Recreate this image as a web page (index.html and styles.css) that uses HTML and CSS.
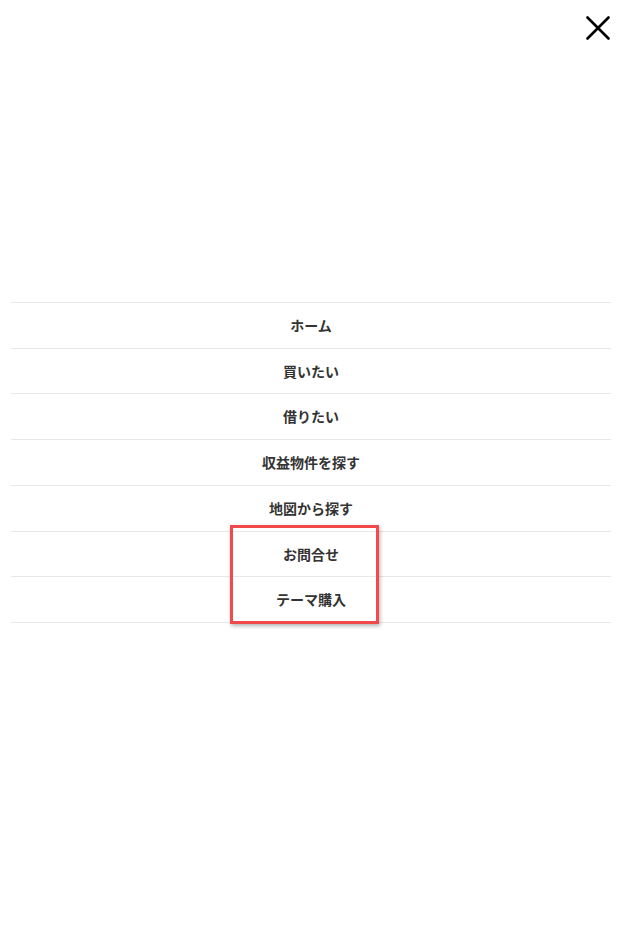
FILE: index.html
```html
<!DOCTYPE html>
<html lang="ja">
<head>
<meta charset="utf-8">
<title>Menu</title>
<link rel="stylesheet" href="styles.css">
</head>
<body>
<div class="drawer">
  <header class="drawer-head">
    <button class="close" aria-label="閉じる">
      <svg width="24" height="24" viewBox="0 0 24 24"><path d="M1.5 1.5 L22.5 22.5 M22.5 1.5 L1.5 22.5" stroke="#000" stroke-width="2.6" stroke-linecap="round" fill="none"/></svg>
    </button>
  </header>
  <nav class="menu">
    <ul class="menu-list">
      <li class="menu-item"><a href="#">ホーム</a></li>
      <li class="menu-item"><a href="#">買いたい</a></li>
      <li class="menu-item"><a href="#">借りたい</a></li>
      <li class="menu-item"><a href="#">収益物件を探す</a></li>
      <li class="menu-item"><a href="#">地図から探す</a></li>
      <li class="menu-item"><a href="#">お問合せ</a></li>
      <li class="menu-item"><a href="#">テーマ購入</a></li>
    </ul>
    <div class="highlight"></div>
  </nav>
</div>
</body>
</html>
```

FILE: styles.css
```css
html, body {
  margin: 0;
  padding: 0;
  background: #fff;
}
body {
  font-family: "Noto Sans CJK JP", "Noto Sans", sans-serif;
  color: #333;
}
.drawer {
  width: 622px;
  min-height: 925px;
}
.drawer-head {
  display: flex;
  justify-content: flex-end;
  padding: 16px 12px 0 0;
  height: 302px;
  box-sizing: border-box;
}
.close {
  border: 0;
  background: none;
  padding: 0;
  width: 24px;
  height: 24px;
  cursor: pointer;
}
.close svg { display: block; }
.menu {
  position: relative;
  margin: 0 11px;
}
.menu-list {
  list-style: none;
  margin: 0;
  padding: 0;
  border-bottom: 1px solid #e8e8e8;
}
.menu-item {
  border-top: 1px solid #e8e8e8;
}
.menu-item a {
  display: block;
  text-align: center;
  padding: 12px 0;
  line-height: 20.7px;
  font-size: 14px;
  font-weight: bold;
  color: #333;
  text-decoration: none;
}
.highlight {
  position: absolute;
  left: 219px;
  top: 223px;
  width: 143px;
  height: 93px;
  border: 3px solid #f24a4a;
  box-shadow: 1px 2px 4px rgba(0,0,0,0.3);
  pointer-events: none;
}
```
